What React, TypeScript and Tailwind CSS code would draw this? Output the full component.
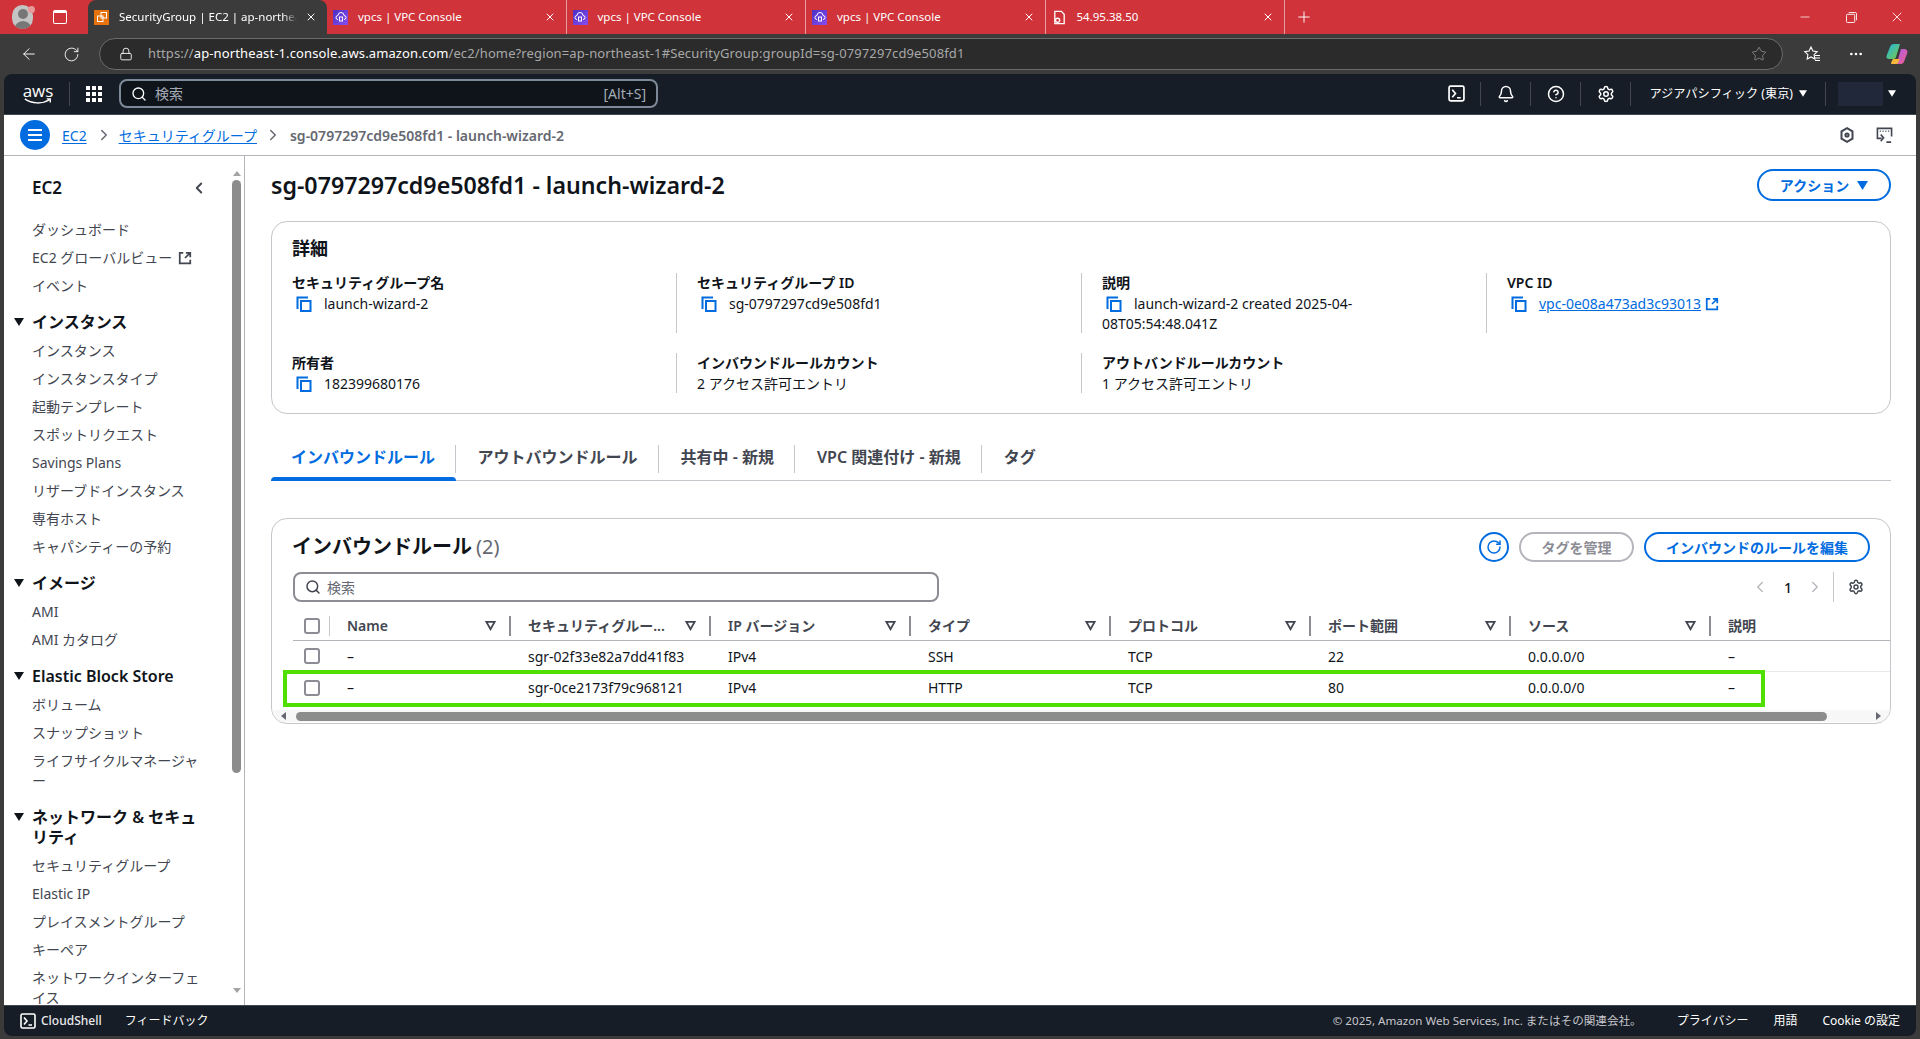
import React from 'react';
import {
  ArrowLeft,
  Bell,
  ChevronLeft,
  ChevronRight,
  CircleHelp,
  Ellipsis,
  Lock,
  Minus,
  Plus,
  RotateCw,
  Search,
  Settings,
  Star,
  X,
} from 'lucide-react';

const Caret: React.FC<{ className?: string }> = ({ className }) => (
  <svg viewBox="0 0 10 8" className={className}>
    <path d="M0 0h10L5 8z" fill="currentColor" />
  </svg>
);

const CopyIcon: React.FC = () => (
  <svg viewBox="0 0 16 16" className="w-4 h-4 inline-block align-[-3px] text-[#006ce0]" fill="none" stroke="currentColor" strokeWidth="2">
    <path d="M1.5 13V1.5H12" />
    <rect x="5" y="5" width="9.5" height="10" />
  </svg>
);

const ExternalIcon: React.FC<{ className?: string }> = ({ className }) => (
  <svg viewBox="0 0 16 16" className={className} fill="none" stroke="currentColor" strokeWidth="2">
    <path d="M6 2H2v12h12v-4" />
    <path d="M9 2h5v5M14 2L8 8" />
  </svg>
);

const ShellIcon: React.FC<{ className?: string }> = ({ className }) => (
  <svg viewBox="0 0 16 16" className={className} fill="none" stroke="currentColor" strokeWidth="1.6">
    <rect x="1" y="1" width="14" height="14" rx="1.5" />
    <path d="M4 4.5L7 8l-3 3.5M8.5 12H12" />
  </svg>
);

const TabCube: React.FC = () => (
  <div className="w-[15px] h-[15px] bg-[#e8730c] flex items-center justify-center shrink-0">
    <svg viewBox="0 0 12 12" className="w-3 h-3" fill="none" stroke="#fff" strokeWidth="1">
      <rect x="5" y="1.5" width="5.5" height="5.5" />
      <rect x="1.5" y="5" width="5.5" height="5.5" />
    </svg>
  </div>
);

const TabCloud: React.FC = () => (
  <div className="w-[15px] h-[15px] bg-gradient-to-br from-[#4a2fc4] to-[#8a4df0] flex items-center justify-center shrink-0">
    <svg viewBox="0 0 12 12" className="w-3 h-3" fill="none" stroke="#fff" strokeWidth="1">
      <path d="M3 8.5a2 2 0 0 1 0-4 3 3 0 0 1 6 0 2 2 0 0 1 0 4" />
      <rect x="4.5" y="6" width="3" height="4" />
    </svg>
  </div>
);

const FilterIcon: React.FC = () => (
  <svg viewBox="0 0 12 12" className="w-[11px] h-[11px] text-[#424650] shrink-0" fill="none" stroke="currentColor" strokeWidth="2">
    <path d="M1.5 2h9L6 10z" />
  </svg>
);

const Checkbox: React.FC = () => (
  <div className="ml-px w-4 h-4 rounded-[3px] border-2 border-[#8c8c94] bg-white" />
);

const tabs = [
  { title: 'vpcs | VPC Console', icon: <TabCloud /> },
  { title: 'vpcs | VPC Console', icon: <TabCloud /> },
  { title: 'vpcs | VPC Console', icon: <TabCloud /> },
  {
    title: '54.95.38.50',
    icon: (
      <svg viewBox="0 0 16 16" className="w-[15px] h-[15px] shrink-0" fill="none" stroke="#fff" strokeWidth="1.4">
        <path d="M3 1.5h7l3 3v10H3z" />
        <circle cx="6" cy="11" r="2.2" fill="#d0343a" stroke="#fff" />
      </svg>
    ),
  },
];

const BrowserChrome: React.FC = () => (
  <div className="shrink-0 text-white">
    <div className="h-[34px] bg-[#d0343a] flex items-stretch">
      <div className="w-[88px] flex items-center shrink-0">
        <div className="relative ml-3 w-[21px] h-[24px]">
          <div className="w-[21px] h-[24px] rounded-full bg-[#c4c4c4] overflow-hidden">
            <div className="mx-auto mt-1 w-2.5 h-2.5 rounded-full bg-[#777777]" />
            <div className="mx-auto mt-0.5 w-[18px] h-3 rounded-t-full bg-[#777777]" />
          </div>
          <div className="absolute -right-[2px] top-[1px] w-[7px] h-[7px] rounded-full bg-[#e89a9a]" />
        </div>
        <div className="ml-[20px] w-[14px] h-[14px] border border-white rounded-[2px] border-t-[3px]" />
      </div>
      <div className="w-[239px] bg-[#3b3b3b] rounded-t-lg flex items-center pl-1.5 pr-[10px] shrink-0">
        <TabCube />
        <span className="ml-[10px] w-[178px] whitespace-nowrap text-[11.5px] [mask-image:linear-gradient(to_right,black_92%,transparent)]">SecurityGroup | EC2 | ap-northeas</span>
        <X className="ml-auto w-3 h-3" />
      </div>
      {tabs.map((tab, i) => (
        <div key={i} className="w-[239.5px] flex items-center pl-[6px] pr-[10px] shrink-0 border-r border-[#e2a0a3]">
          {tab.icon}
          <span className="ml-[10px] text-[11.5px] whitespace-nowrap">{tab.title}</span>
          <X className="ml-auto w-3 h-3" />
        </div>
      ))}
      <div className="ml-2.5 flex items-center">
        <Plus className="w-[18px] h-[18px]" strokeWidth={1.25} />
      </div>
      <div className="ml-auto flex items-center">
        <div className="w-[46px] flex justify-center"><Minus className="w-3.5 h-3.5" strokeWidth={1.25} /></div>
        <div className="w-[46px] flex justify-center">
          <svg viewBox="0 0 12 12" className="w-[11px] h-[11px]" fill="none" stroke="#fff">
            <rect x="0.5" y="2.5" width="9" height="9" rx="1" />
            <path d="M3 .5h7a1.5 1.5 0 0 1 1.5 1.5v7" />
          </svg>
        </div>
        <div className="w-[46px] flex justify-center"><X className="w-4 h-4" strokeWidth={1.25} /></div>
      </div>
    </div>
    <div className="h-10 bg-[#3b3b3b] flex items-center">
      <ArrowLeft className="ml-5 w-[18px] h-[18px]" strokeWidth={1.25} />
      <RotateCw className="ml-[25px] w-[17px] h-[17px]" strokeWidth={1.25} />
      <div className="ml-[19px] w-[1684px] h-8 rounded-full bg-[#2b2b2b] border border-[#6b6b6b] flex items-center pl-[19px] pr-[15px]">
        <Lock className="w-[14px] h-[14px]" strokeWidth={1.5} />
        <span className="ml-[15px] text-[13px] tracking-[0.12px] text-[#a8a8a8] whitespace-nowrap">
          https://<span className="text-white">ap-northeast-1.console.aws.amazon.com</span>/ec2/home?region=ap-northeast-1#SecurityGroup:groupId=sg-0797297cd9e508fd1
        </span>
        <Star className="ml-auto w-4 h-4 text-[#8e8e8e]" strokeWidth={1.25} />
      </div>
      <svg viewBox="0 0 18 18" className="ml-[20px] w-[18px] h-[18px]" fill="none" stroke="#fff" strokeWidth="1.1">
        <path d="M8 2l1.900 4 4.300.6-3.100 3 .7 4.300L8 11.900l-3.800 2 .7-4.300-3.100-3 4.300-.6z" />
        <path d="M12 10.500h5M12 13h5M12 15.500h5" />
      </svg>
      <Ellipsis className="ml-[27px] w-4 h-4" />
      <svg viewBox="0 0 22 22" className="ml-[22px] w-[22px] h-[22px]">
        <defs>
          <linearGradient id="copilot-a" x1="0" y1="0" x2="1" y2="1">
            <stop offset="0" stopColor="#1fb6e8" />
            <stop offset="1" stopColor="#7bc940" />
          </linearGradient>
          <linearGradient id="copilot-b" x1="0" y1="0" x2="1" y2="1">
            <stop offset="0" stopColor="#a95cf0" />
            <stop offset="1" stopColor="#f0608a" />
          </linearGradient>
        </defs>
        <path d="M8 1h6l-4 13c-.5 1.500-1.500 2-3 2H3c-2 0-3-1.500-2.500-3L4 4c.6-2 2-3 4-3z" fill="url(#copilot-a)" />
        <path d="M15 6h3c2.500 0 4 2 3.300 4l-3 8c-.7 2.500-2.300 3-4.300 3H8c2 0 3-1 3.500-3z" fill="url(#copilot-b)" />
        <path d="M7 16h6.500l-1 3c-.4 1.200-1.500 2-2.500 2H6c-1.500 0-1-1.500 1-5z" fill="#f5b93a" />
      </svg>
    </div>
  </div>
);

const NavSep: React.FC = () => <div className="w-px h-6 bg-[#424650]" />;

const TopNav: React.FC = () => (
  <div className="h-[41px] shrink-0 bg-[#161d26] rounded-t-lg flex items-center text-white border-b border-[#424650] pb-px">
    <div className="ml-[18px] w-[32px] flex flex-col items-center leading-none">
      <span className="text-[17px] leading-[15px] font-medium [font-family:'Open_Sans',sans-serif]">aws</span>
      <svg viewBox="0 0 32 8" className="w-[32px] h-[7px]" fill="none" stroke="#fff" strokeWidth="1.6">
        <path d="M1 1c8 6 20 6 28 1M26 1h4v4" />
      </svg>
    </div>
    <div className="ml-[15px] w-px h-6 bg-[#424650]" />
    <div className="ml-[16px] grid grid-cols-3 gap-[2px] w-[16px]">
      {Array.from({ length: 9 }).map((_, i) => (
        <div key={i} className="w-1 h-1 bg-white" />
      ))}
    </div>
    <div className="ml-[17px] w-[539px] h-[29px] rounded-lg bg-[#0f141a] border-2 border-[#7d8998] flex items-center px-[10px]">
      <Search className="w-4 h-4" strokeWidth={2} />
      <span className="ml-2 text-[14px] text-[#a4abb5]">検索</span>
      <span className="ml-auto text-[14px] text-[#a4abb5]">[Alt+S]</span>
    </div>
    <div className="ml-auto flex items-center">
      <ShellIcon className="w-[17px] h-[17px]" />
      <div className="ml-[15px]"><NavSep /></div>
      <Bell className="ml-[16px] w-[18px] h-[18px]" strokeWidth={2} />
      <div className="ml-[15px]"><NavSep /></div>
      <CircleHelp className="ml-[16px] w-[18px] h-[18px]" strokeWidth={2} />
      <div className="ml-[15px]"><NavSep /></div>
      <Settings className="ml-[16px] w-[18px] h-[18px]" strokeWidth={2} />
      <div className="ml-[15px]"><NavSep /></div>
      <span className="ml-[18px] pt-px text-[12.2px] whitespace-nowrap">アジアパシフィック (東京)</span>
      <Caret className="ml-[6px] w-2 h-[7px]" />
      <div className="ml-[18px]"><NavSep /></div>
      <div className="ml-[12px] w-[45px] h-6 bg-[#20283a]" />
      <Caret className="ml-[5px] mr-[20px] w-2 h-[7px]" />
    </div>
  </div>
);

const Breadcrumb: React.FC = () => (
  <div className="h-[41px] shrink-0 bg-white flex items-center border-b border-[#b4b4bb] text-[14px]">
    <div className="ml-4 w-[30px] h-[30px] rounded-full bg-[#006ce0] flex flex-col items-center justify-center gap-[3px]">
      <div className="w-3.5 h-0.5 bg-white" />
      <div className="w-3.5 h-0.5 bg-white" />
      <div className="w-3.5 h-0.5 bg-white" />
    </div>
    <span className="ml-3 text-[#006ce0] underline underline-offset-2">EC2</span>
    <ChevronRight className="ml-[8px] w-[18px] h-[18px] text-[#656871]" />
    <span className="ml-[6px] text-[#006ce0] underline underline-offset-2">セキュリティグループ</span>
    <ChevronRight className="ml-[7px] w-[18px] h-[18px] text-[#656871]" />
    <span className="ml-[8px] text-[#656871] font-semibold text-[14px]">sg-0797297cd9e508fd1 - launch-wizard-2</span>
    <div className="ml-auto flex items-center">
      <svg viewBox="0 0 16 16" className="w-4 h-4 text-[#424650]" fill="none" stroke="currentColor" strokeWidth="2">
        <path d="M8 1.2l5.5 3.2v7.2L8 14.8l-5.5-3.2V4.400z" />
        <circle cx="8" cy="8" r="1.6" />
      </svg>
      <svg viewBox="0 0 18 18" className="ml-[21px] mr-[23px] w-[17px] h-[17px] text-[#424650]" fill="none" stroke="currentColor" strokeWidth="1.7">
        <path d="M6 12H1.500V1.500h15V10" />
        <path d="M4 4.500h1M7 4.500h1M10 4.500h1M13 4.500h1" />
        <path d="M5 8l3 3.500L5 15M11 16h5" />
      </svg>
    </div>
  </div>
);

type NavSection = { heading?: string; items: string[] };

const navSections: NavSection[] = [
  { heading: 'インスタンス', items: ['インスタンス', 'インスタンスタイプ', '起動テンプレート', 'スポットリクエスト', 'Savings Plans', 'リザーブドインスタンス', '専有ホスト', 'キャパシティーの予約'] },
  { heading: 'イメージ', items: ['AMI', 'AMI カタログ'] },
  { heading: 'Elastic Block Store', items: ['ボリューム', 'スナップショット', 'ライフサイクルマネージャー'] },
  { heading: 'ネットワーク & セキュリティ', items: ['セキュリティグループ', 'Elastic IP', 'プレイスメントグループ', 'キーペア', 'ネットワークインターフェイス'] },
];

const NavItem: React.FC<{ children: React.ReactNode }> = ({ children }) => (
  <div className="pl-7 w-[199px] py-1 text-[14px] leading-5 text-[#424650]">{children}</div>
);

const Sidebar: React.FC = () => (
  <div className="relative w-[241px] shrink-0 bg-white border-r border-[#b4b4bb] overflow-hidden">
    <div className="pt-[22px] pl-7 pr-[36px] flex items-center justify-between h-[42px]">
      <span className="text-[17px] font-semibold text-[#0f141a] leading-5">EC2</span>
      <ChevronLeft className="w-[18px] h-[18px] text-[#424650]" strokeWidth={2.5} />
    </div>
    <div className="mt-[18px]">
      <NavItem>ダッシュボード</NavItem>
      <NavItem>
        <span className="flex items-center gap-[6px] whitespace-nowrap">
          EC2 グローバルビュー
          <ExternalIcon className="w-[14px] h-[14px]" />
        </span>
      </NavItem>
      <NavItem>イベント</NavItem>
    </div>
    {navSections.map((section) => (
      <div key={section.heading} className="mt-3">
        <div className="relative pl-7 w-[199px] mb-[5px] text-[16px] leading-5 font-semibold text-[#0f141a]">
          <Caret className="absolute left-[10px] top-[6px] w-2.5 h-2" />
          {section.heading}
        </div>
        {section.items.map((item) => (
          <NavItem key={item}>{item}</NavItem>
        ))}
      </div>
    ))}
    {/* scrollbar */}
    <div className="absolute right-[3px] top-[15px] w-0 h-0 border-x-4 border-x-transparent border-b-[5px] border-b-[#a3a3a3]" />
    <div className="absolute right-[3px] top-[24px] w-[9px] h-[593px] rounded-full bg-[#8c8c8c]" />
    <div className="absolute right-[3px] bottom-[12px] w-0 h-0 border-x-4 border-x-transparent border-t-[5px] border-t-[#a3a3a3]" />
  </div>
);

const Detail: React.FC<{ label: string; first?: boolean; children: React.ReactNode }> = ({ label, first, children }) => (
  <div className={first ? 'pl-5 leading-5' : 'pl-5 leading-5 border-l border-[#c6c6cd]'}>
    <div className="text-[14px] font-semibold text-[#0f141a]">{label}</div>
    <div className="mt-px text-[14px] text-[#0f141a] max-w-[290px]">{children}</div>
  </div>
);

const DetailsCard: React.FC = () => (
  <div className="mt-[19px] h-[193px] rounded-2xl border border-[#c6c6cd] bg-white">
    <div className="pl-5 pt-[14px] text-[18px] leading-6 font-semibold text-[#0f141a]">詳細</div>
    <div className="mt-[13px] grid grid-cols-[404px_405px_405px_1fr] grid-rows-[60px_40px] gap-y-5">
      <Detail label="セキュリティグループ名" first>
        <span className="ml-1 mr-3"><CopyIcon /></span>launch-wizard-2
      </Detail>
      <Detail label="セキュリティグループ ID">
        <span className="ml-1 mr-3"><CopyIcon /></span>sg-0797297cd9e508fd1
      </Detail>
      <Detail label="説明">
        <span className="ml-1 mr-3"><CopyIcon /></span>launch-wizard-2 created 2025-04-08T05:54:48.041Z
      </Detail>
      <Detail label="VPC ID">
        <span className="ml-1 mr-3"><CopyIcon /></span>
        <span className="text-[#006ce0] underline">vpc-0e08a473ad3c93013</span>
        <ExternalIcon className="ml-1 inline-block w-[14px] h-[14px] align-[-2px] text-[#006ce0]" />
      </Detail>
      <Detail label="所有者" first>
        <span className="ml-1 mr-3"><CopyIcon /></span>182399680176
      </Detail>
      <Detail label="インバウンドルールカウント">2 アクセス許可エントリ</Detail>
      <Detail label="アウトバンドルールカウント">1 アクセス許可エントリ</Detail>
    </div>
  </div>
);

const tabLabels = ['インバウンドルール', 'アウトバウンドルール', '共有中 - 新規', 'VPC 関連付け - 新規', 'タグ'];

const Tabs: React.FC = () => (
  <div className="mt-[23px] h-[44px] flex border-b border-[#c6c6cd] items-stretch">
    {tabLabels.map((label, i) => (
      <div key={label} className="relative flex items-center pb-[3px]">
        <span className={i === 0 ? 'pl-5 pr-[21px] text-[16px] font-semibold text-[#006ce0]' : 'px-[21.5px] text-[16px] font-semibold text-[#424650]'}>
          {label}
        </span>
        {i < tabLabels.length - 1 && <div className="absolute right-0 top-[8px] h-[28px] w-px bg-[#c6c6cd]" />}
        {i === 0 && <div className="absolute left-0 right-0 bottom-[-1px] h-1 bg-[#006ce0] rounded-t-sm" />}
      </div>
    ))}
  </div>
);

const columns = [
  { label: 'Name', width: 'w-[181px]' },
  { label: 'セキュリティグルー...', width: 'w-[200px]' },
  { label: 'IP バージョン', width: 'w-[200px]' },
  { label: 'タイプ', width: 'w-[200px]' },
  { label: 'プロトコル', width: 'w-[200px]' },
  { label: 'ポート範囲', width: 'w-[200px]' },
  { label: 'ソース', width: 'w-[200px]' },
];

const rows = [
  ['–', 'sgr-02f33e82a7dd41f83', 'IPv4', 'SSH', 'TCP', '22', '0.0.0.0/0', '–'],
  ['–', 'sgr-0ce2173f79c968121', 'IPv4', 'HTTP', 'TCP', '80', '0.0.0.0/0', '–'],
];

const TableRow: React.FC<{ row: string[]; height: string }> = ({ row, height }) => (
  <div className={`flex items-center ${height} text-[14px] text-[#0f141a]`}>
    <div className="w-[37px] pl-[10px]"><Checkbox /></div>
    {row.slice(0, 7).map((cell, i) => (
      <div key={i} className={`${columns[i].width} pl-[17px] whitespace-nowrap`}>{cell}</div>
    ))}
    <div className="pl-[17px]">{row[7]}</div>
  </div>
);

const RulesCard: React.FC = () => (
  <div className="mt-[37px] h-[206px] rounded-2xl border border-[#c6c6cd] bg-white overflow-hidden">
    <div className="pl-5 pr-[20px] pt-[13px] flex items-center h-[43px]">
      <span className="text-[20px] font-semibold text-[#0f141a]">インバウンドルール</span>
      <span className="ml-1 text-[20px] text-[#656871]">(2)</span>
      <div className="ml-auto flex items-center gap-2.5">
        <div className="w-[30px] h-[30px] rounded-full border-2 border-[#006ce0] flex items-center justify-center">
          <RotateCw className="w-4 h-4 text-[#006ce0]" strokeWidth={2.25} />
        </div>
        <div className="w-[115px] h-[30px] rounded-full border-2 border-[#b4b4bb] flex items-center justify-center text-[14px] font-semibold text-[#8c8c94]">
          タグを管理
        </div>
        <div className="w-[226px] h-[30px] rounded-full border-2 border-[#006ce0] flex items-center justify-center text-[14px] font-semibold text-[#006ce0]">
          インバウンドのルールを編集
        </div>
      </div>
    </div>
    <div className="mt-[10px] pl-[21px] pr-[26px] flex items-center h-[30px]">
      <div className="w-[646px] h-[30px] rounded-lg border-2 border-[#8c8c94] flex items-center px-[10px]">
        <Search className="w-4 h-4 text-[#424650]" strokeWidth={2.25} />
        <span className="ml-[6px] text-[14px] text-[#656871]">検索</span>
      </div>
      <div className="ml-auto flex items-center">
        <ChevronLeft className="w-[18px] h-[18px] text-[#b4b4bb]" strokeWidth={1.75} />
        <span className="ml-[15px] text-[14px] font-medium text-[#0f141a]">1</span>
        <ChevronRight className="ml-[14px] w-[18px] h-[18px] text-[#b4b4bb]" strokeWidth={1.75} />
        <div className="ml-[9px] w-px h-[30px] bg-[#c6c6cd]" />
        <Settings className="ml-[14px] w-4 h-4 text-[#424650]" strokeWidth={2.25} />
      </div>
    </div>
    <div className="ml-[21px] mt-[9px]">
      <div className="flex items-center h-[30px] border-b border-[#b4b4bb] text-[14px] font-semibold text-[#424650]">
        <div className="w-[37px] pl-[10px] h-5 flex items-center border-r border-[#c6c6cd]"><Checkbox /></div>
        {columns.map((col) => (
          <div key={col.label} className={`${col.width} pl-[17px] pr-[13px] h-5 flex items-center justify-between whitespace-nowrap border-r-2 border-[#8c8c94]`}>
            <span>{col.label}</span>
            <FilterIcon />
          </div>
        ))}
        <div className="pl-[17px]">説明</div>
      </div>
      <div className="border-b border-[#e9e9ed]">
        <TableRow row={rows[0]} height="h-[30px]" />
      </div>
      <div className="relative">
        <TableRow row={rows[1]} height="h-[31px]" />
        {/* highlight drawn over the screenshot */}
        <div className="absolute -left-[10px] -top-[2px] w-[1482px] h-[37px] border-4 border-[#4fe000] pointer-events-none" />
      </div>
    </div>
    <div className="relative mt-[7px] h-[12px] bg-[#f7f7f7]">
      <div className="absolute left-[24px] top-[2px] w-[1531px] h-[9px] rounded-full bg-[#8c8c8c]" />
      <div className="absolute left-[9px] top-[2px] w-0 h-0 border-y-4 border-y-transparent border-r-[5px] border-r-[#656871]" />
      <div className="absolute right-[9px] top-[2px] w-0 h-0 border-y-4 border-y-transparent border-l-[5px] border-l-[#656871]" />
    </div>
  </div>
);

const Footer: React.FC = () => (
  <div className="h-[31px] shrink-0 bg-[#161d26] rounded-b-lg flex items-center text-[12px] text-white border-t border-[#424650]">
    <ShellIcon className="ml-[16px] w-4 h-4" />
    <span className="ml-[5px] font-medium text-[#e9e9ed]">CloudShell</span>
    <span className="ml-[23px]">フィードバック</span>
    <span className="ml-auto text-[11.6px] text-[#c6c6cd]">© 2025, Amazon Web Services, Inc. またはその関連会社。</span>
    <span className="ml-[35px]">プライバシー</span>
    <span className="ml-[25px]">用語</span>
    <span className="ml-[25px] mr-4">Cookie の設定</span>
  </div>
);

export default function App() {
  return (
    <div className="h-screen overflow-hidden bg-[#3b3b3b] flex flex-col [font-family:'Noto_Sans','Noto_Sans_CJK_JP',sans-serif]">
      <BrowserChrome />
      <div className="mx-1 mb-[3px] flex-1 min-h-0 flex flex-col">
        <TopNav />
        <Breadcrumb />
        <div className="flex-1 min-h-0 flex bg-white">
          <Sidebar />
          <div className="flex-1 min-w-0 pl-[26px] pr-[25px] pt-[12px]">
            <div className="flex items-center justify-between h-[34px]">
              <h1 className="text-[23.2px] font-semibold text-[#0f141a]">sg-0797297cd9e508fd1 - launch-wizard-2</h1>
              <div className="w-[134px] h-[32px] rounded-full border-2 border-[#006ce0] flex items-center justify-center gap-2 text-[14px] font-semibold text-[#006ce0]">
                アクション
                <Caret className="w-[11px] h-[9px]" />
              </div>
            </div>
            <DetailsCard />
            <Tabs />
            <RulesCard />
          </div>
        </div>
        <Footer />
      </div>
    </div>
  );
}
